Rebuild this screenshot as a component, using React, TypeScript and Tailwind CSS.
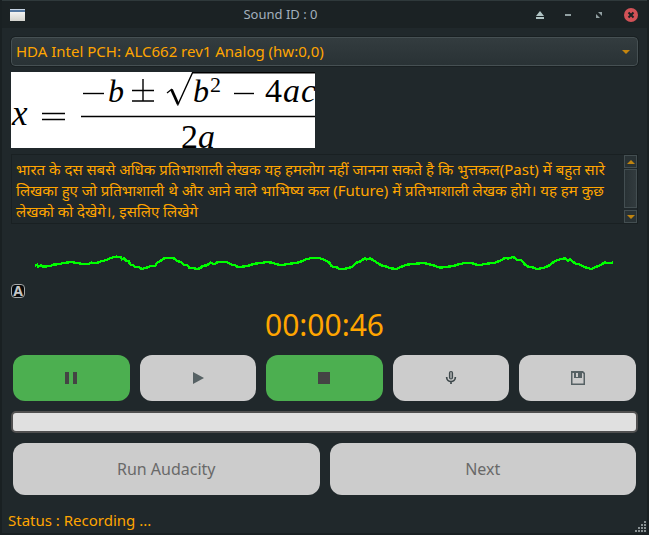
import type { ReactNode } from "react";

const WAVE =
  "105,347 112,344 114,350 124,346 130,350 150,348 160,344 180,342 190,339 215,336 225,338 250,342 265,342 275,338 290,339 300,335 320,330 335,323 350,320 362,322 366,328 372,325 378,332 386,332 390,343 400,346 405,351 418,352 425,357 440,353 450,349 465,348 472,338 480,334 490,326 500,324 520,324 530,332 545,337 552,344 562,345 568,353 580,354 590,357 600,355 608,348 620,346 632,338 642,343 652,337 680,336 695,344 705,346 712,350 722,351 745,347 765,341 785,339 800,336 815,338 828,342 845,346 860,342 890,339 905,334 915,329 935,324 960,325 975,330 988,338 995,349 1010,352 1020,358 1035,356 1045,354 1058,350 1070,338 1082,334 1095,324 1100,328 1110,325 1125,334 1135,341 1147,347 1160,350 1172,355 1190,357 1205,350 1220,344 1240,342 1270,339 1285,342 1300,346 1320,353 1345,350 1360,348 1375,343 1400,338 1418,340 1435,346 1455,342 1485,338 1500,332 1515,324 1525,326 1540,321 1552,330 1565,331 1575,344 1585,350 1598,352 1610,357 1630,354 1645,348 1665,333 1680,328 1695,325 1703,332 1710,328 1725,340 1740,344 1755,352 1775,357 1790,350 1800,346 1815,337 1825,340 1840,337";

function Formula() {
  return (
    <svg
      role="img"
      aria-label="Quadratic formula"
      viewBox="0 0 304 76"
      className="h-[76px] w-[304px] bg-white"
      fontFamily="'Liberation Serif', serif"
      fill="#000"
    >
      <text x="1" y="53" fontSize="35" fontStyle="italic">x</text>
      <path d="M31 41.5h23M31 47.5h23" stroke="#000" strokeWidth="1.4" />
      <path d="M70 44.5H304" stroke="#000" strokeWidth="1.5" />
      <path d="M72 21.5h21" stroke="#000" strokeWidth="1.4" />
      <text x="97" y="30" fontSize="32" fontStyle="italic">b</text>
      <path d="M121 18.5h22M132 7v22M121 29h22" stroke="#000" strokeWidth="1.4" />
      <path d="M156 21l5-4" stroke="#000" strokeWidth="1.2" />
      <path d="M160.500 17.500L167 32" stroke="#000" strokeWidth="2.800" />
      <path d="M166.500 33.500L181.500 0.800H304" stroke="#000" strokeWidth="1.400" fill="none" />
      <text x="182" y="30" fontSize="32" fontStyle="italic">b</text>
      <text x="199" y="20" fontSize="22">2</text>
      <path d="M223 21.500h20" stroke="#000" strokeWidth="1.400" />
      <text x="254" y="30" fontSize="34">4</text>
      <text x="272" y="30" fontSize="34" fontStyle="italic">a</text>
      <text x="290" y="30" fontSize="34" fontStyle="italic">c</text>
      <text x="170" y="76" fontSize="34">2</text>
      <text x="187" y="76" fontSize="34" fontStyle="italic">a</text>
    </svg>
  );
}

function TitleButton({ label, children }: { label: string; children: ReactNode }) {
  return (
    <button type="button" aria-label={label} className="flex size-4 items-center justify-center">
      {children}
    </button>
  );
}

function TitleBar() {
  return (
    <header className="flex h-7 items-center border-t border-[#2f393b] bg-[#1b2224] px-2">
      <svg viewBox="0 0 15 12" className="h-3 w-[15px]" aria-hidden="true">
        <defs>
          <linearGradient id="win" x1="0" y1="0" x2="0" y2="1">
            <stop offset="0" stopColor="#fff" />
            <stop offset="1" stopColor="#d3d3cd" />
          </linearGradient>
        </defs>
        <path d="M0 0h15v12H0z" fill="url(#win)" />
        <path d="M0 0h15v3H0z" fill="#54779f" />
        <path d="M0 0h15v1H0z" fill="#c5d3e3" />
      </svg>
      <h1 className="flex-1 pl-1 text-center text-[13px] text-[#a3b0bd]">Sound ID : 0</h1>
      <div className="flex items-center">
        <TitleButton label="Keep above">
          <svg viewBox="0 0 8 8" className="size-2" fill="#b0c4c4">
            <path d="M4 0l4 5H0zM0 6h8v2H0z" />
          </svg>
        </TitleButton>
        <div className="mx-3 flex">
          <TitleButton label="Minimize">
            <svg viewBox="0 0 6 2" className="h-0.5 w-1.5" fill="#92a0a2">
              <path d="M0 0h6v2H0z" />
            </svg>
          </TitleButton>
        </div>
        <div className="mr-4 ml-[3px] flex">
          <TitleButton label="Maximize">
            <svg viewBox="0 0 6 6" className="size-1.5" fill="#92a0a2">
              <path d="M2 0h4v4zM0 2l4 4H0z" />
            </svg>
          </TitleButton>
        </div>
        <TitleButton label="Close">
          <svg viewBox="0 0 14 14" className="size-3.5 shrink-0">
            <circle cx="7" cy="7" r="7" fill="#d25257" />
            <path d="M4.500 4.500l5 5m0-5l-5 5" stroke="#1b2224" strokeWidth="2" />
          </svg>
        </TitleButton>
      </div>
    </header>
  );
}

function ScrollArrow({ down = false }: { down?: boolean }) {
  return (
    <button
      type="button"
      aria-label={down ? "Scroll down" : "Scroll up"}
      className="flex h-[13px] items-center justify-center border border-[#434e51] bg-[#293235]"
    >
      <svg viewBox="0 0 8 4" className="h-1 w-2" fill="#bf830f">
        <path d={down ? "M0 0h8L4 4z" : "M0 4h8L4 0z"} />
      </svg>
    </button>
  );
}

function ActionButton({ label, active = false, children }: { label: string; active?: boolean; children: ReactNode }) {
  return (
    <button
      type="button"
      aria-label={label}
      className={`flex h-[46px] flex-1 items-center justify-center rounded-xl ${active ? "bg-[#4caf50]" : "bg-[#cccccc]"}`}
    >
      <svg viewBox="0 0 16 16" className="size-4" aria-hidden="true">
        {children}
      </svg>
    </button>
  );
}

export default function App() {
  return (
    <div className="flex min-h-screen flex-col border-x-2 border-b-2 border-[#192022] bg-[#20282b] font-['Noto_Sans','Noto_Sans_Devanagari',sans-serif] text-[15px] text-[#ffa500]">
      <TitleBar />
      <main className="flex flex-1 flex-col px-[9px] pt-[9px]">
        <div className="relative flex">
          <select
            aria-label="Audio device"
            className="h-[29px] w-full appearance-none rounded-sm border border-[#465053] bg-linear-to-b from-[#333c3f] to-[#293235] px-1 outline outline-[#192022]"
          >
            <option>HDA Intel PCH: ALC662 rev1 Analog (hw:0,0)</option>
          </select>
          <svg viewBox="0 0 8 4" className="pointer-events-none absolute top-[13px] right-2 h-1 w-2" fill="#c5850e">
            <path d="M0 0h8L4 4z" />
          </svg>
        </div>

        <div className="mt-1.5">
          <Formula />
        </div>

        <div className="mt-1.5 flex h-[70px] border border-[#192022]">
          <textarea
            aria-label="Prompt text"
            readOnly
            className="flex-1 resize-none overflow-hidden px-1 pt-1 leading-[21px] outline-none"
            defaultValue={
              "भारत के दस सबसे अधिक प्रतिभाशाली लेखक यह हमलोग नहीं जानना सकते है कि भुत्तकल(Past) में बहुत सारे\nलिखका हुए जो प्रतिभाशाली थे और आने वाले भाभिष्य कल (Future) में प्रतिभाशाली लेखक होगे। यह हम कुछ\nलेखको को देखेगे।, इसलिए लिखेगे"
            }
          />
          <div className="flex w-[13px] flex-col">
            <ScrollArrow />
            <div className="mt-px mb-0.5 flex-1 border border-[#434e51] bg-linear-to-r from-[#293235] to-[#323b3e]" />
            <ScrollArrow down />
          </div>
        </div>

        <svg viewBox="33 222 1881 180" preserveAspectRatio="none" className="h-[60px] w-full" role="img" aria-label="Waveform">
          <polyline points={WAVE} fill="none" stroke="#00ff00" strokeWidth="7" shapeRendering="crispEdges" />
        </svg>

        <div className="flex size-3.5 items-center justify-center rounded-sm border border-[#a5a8a9] bg-[#080a0b] text-sm leading-none font-bold text-[#c4c6c7]">
          A
        </div>

        <output className="mt-1.5 block text-center text-[30px] leading-[41px]">00:00:46</output>

        <div className="mt-2.5 flex gap-2.5 px-0.5">
          <ActionButton label="Pause" active>
            <path d="M2 2h4v12H2zM10 2h4v12h-4z" fill="#444" />
          </ActionButton>
          <ActionButton label="Play">
            <path d="M3 2l11 6-11 6z" fill="#566164" />
          </ActionButton>
          <ActionButton label="Stop" active>
            <path d="M2 2h12v12H2z" fill="#444" />
          </ActionButton>
          <ActionButton label="Record">
            <rect x="6.500" y="1.500" width="3" height="7.500" rx="1.500" fill="#9da1a2" stroke="#3f494c" strokeWidth="1.200" />
            <path d="M3.700 7v.5a4.300 4 0 0 0 8.600 0V7M8 11.500V14" fill="none" stroke="#3f494c" strokeWidth="1.700" />
          </ActionButton>
          <ActionButton label="Save">
            <path
              d="M1 1h12l2 2v12H1zM2.500 3v10.500h11V4l-1-1H12v5H4V3zM6 3v3h2V3z"
              fill="#566164"
              fillRule="evenodd"
            />
            <path d="M4 3h8v5H4z" fill="#566164" />
            <path d="M6 3h2v4H6z" fill="#cccccc" />
          </ActionButton>
        </div>

        <div
          role="progressbar"
          aria-label="Progress"
          aria-valuenow={0}
          className="mt-2.5 h-[22px] rounded-[5px] border-2 border-[#505050] bg-[#e0e0e0]"
        />

        <div className="mt-2.5 flex gap-2.5 px-0.5 text-base text-[#696969]">
          <button type="button" className="h-[52px] flex-1 rounded-xl bg-[#cccccc]">
            Run Audacity
          </button>
          <button type="button" className="h-[52px] flex-1 rounded-xl bg-[#cccccc]">
            Next
          </button>
        </div>
      </main>
      <footer className="flex h-[26px] items-center justify-between pl-1.5">
        <span>Status : Recording ...</span>
        <svg viewBox="0 0 11 11" className="mr-px mb-px size-[11px] self-end" fill="#899193" aria-hidden="true">
          <path d="M9 0h2v2H9zM6 3h2v2H6zM9 3h2v2H9zM3 6h2v2H3zM6 6h2v2H6zM9 6h2v2H9zM0 9h2v2H0zM3 9h2v2H3zM6 9h2v2H6zM9 9h2v2H9z" />
        </svg>
      </footer>
    </div>
  );
}
